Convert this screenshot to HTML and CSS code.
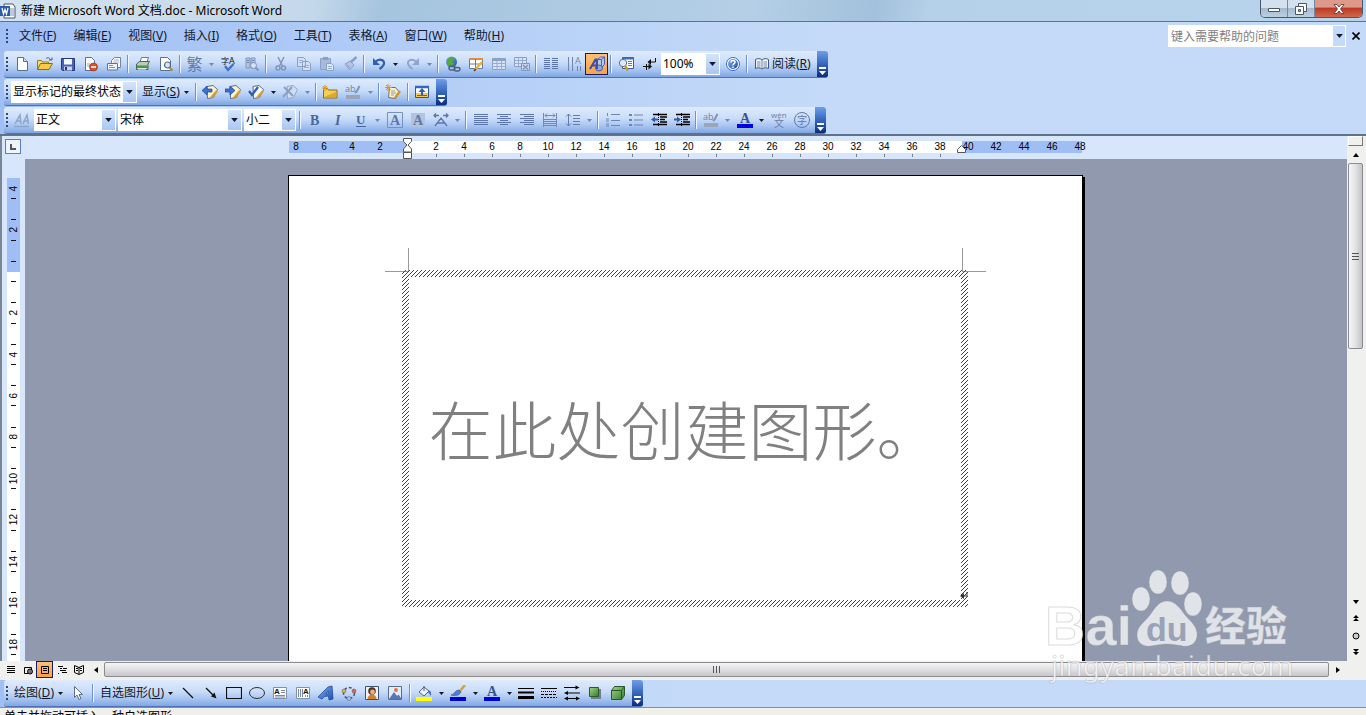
FILE: index.html
```
<!DOCTYPE html>
<html lang="zh-CN">
<head>
    <meta charset="UTF-8">
    <meta name="viewport" content="width=device-width, initial-scale=1.0">
    <title>新建 Microsoft Word 文档.doc - Microsoft Word</title>
    <link rel="stylesheet" href="styles.css">
</head>
<body>
    <!-- shared fills -->
    <svg class="fills" aria-hidden="true">
        <defs>
            <linearGradient id="green" x1="0" y1="0" x2="1" y2="1"><stop offset="0" stop-color="#a5d28a"/><stop offset="1" stop-color="#2f7d2b"/></linearGradient>
            <linearGradient id="blue" x1="0" y1="0" x2="1" y2="1"><stop offset="0" stop-color="#7fb2f2"/><stop offset="1" stop-color="#1d4fae"/></linearGradient>
            <pattern id="hatch" width="4" height="4" patternUnits="userSpaceOnUse" shape-rendering="crispEdges"><path d="M0 3h1v1H0zM1 2h1v1H1zM2 1h1v1H2zM3 0h1v1H3z" fill="#444"/></pattern>
        </defs>
    </svg>
    <!-- icon sprite -->
    <svg class="sprite" aria-hidden="true">
        <symbol id="caret" viewBox="0 0 5 3"><path d="M0 0h5L2.500 3z" fill="currentColor"/></symbol>
        <symbol id="word" viewBox="0 0 16 16"><path d="M4 1h9l2 3v11H4z" fill="#fff" stroke="#456"/><path d="M9 6h5M9 8h5M9 10h5M9 12h5" stroke="#7c93b8"/><path d="M0 3h10v10H0z" fill="#2a5caa"/><path d="M2 5l1.500 6L5 6.500 6.500 11 8 5" fill="none" stroke="#fff" stroke-width="1.300"/></symbol>
        <symbol id="new" viewBox="0 0 16 16"><path d="M3.500 1.500h6l4 4v9h-10z" fill="#fff" stroke="#5a6f94"/><path d="M9.500 1.500v4h4" fill="#cfdcf2" stroke="#5a6f94"/></symbol>
        <symbol id="open" viewBox="0 0 16 16"><path d="M.5 13.500v-9h4l1 1.500h6v2.500" fill="#f7d774" stroke="#9b7a1c"/><path d="M.5 13.500l3-6h12l-3.500 6z" fill="#fbc945" stroke="#8f6d12"/><path d="M9 2.500c2-1.500 4-.5 4.500 1.500M12 4h3V1.500" fill="none" stroke="#43618f"/></symbol>
        <symbol id="save" viewBox="0 0 16 16"><path d="M1.500 2.500h13v12h-12l-1-1z" fill="#4b63b5" stroke="#26377c"/><path d="M4 3h8v5.500H4z" fill="#f4f7ff"/><path d="M4 10.500h8v4H4z" fill="#cbd3ea"/><path d="M5 11h2v3H5z" fill="#26377c"/></symbol>
        <symbol id="perm" viewBox="0 0 16 16"><path d="M2.500 1.500h6l3 3v10h-9z" fill="#fff" stroke="#5a6f94"/><path d="M4 8h3M4 10h3" stroke="#9ab"/><circle cx="10.500" cy="11" r="4" fill="#d4532d" stroke="#8e2e12" stroke-width=".6"/><path d="M8 11h5" stroke="#fff" stroke-width="1.600"/></symbol>
        <symbol id="mail" viewBox="0 0 16 16"><path d="M5.500 9.500v-5l3-3h6v10h-3" fill="#fff" stroke="#7284a5"/><path d="M8 4h5M7 6h6" stroke="#a5b2c9"/><path d="M1.500 7.500h10v6.500h-10z" fill="#eef3fb" stroke="#5f7396"/><path d="M3 9.500h4M3 11.500h6" stroke="#8194b5"/></symbol>
        <symbol id="print" viewBox="0 0 16 16"><path d="M5 6l1.500-4.500h7L12 6z" fill="#fff" stroke="#6a7a90"/><path d="M1.500 8l3-2.500h10l-1.500 2.500v5.500h-11.500z" fill="#b9cdbb" stroke="#4c6552"/><path d="M2 9.500h11v2.500H2z" fill="#3f9c44"/><path d="M3 13h8" stroke="#fff"/></symbol>
        <symbol id="preview" viewBox="0 0 16 16"><path d="M2.500 1.500h7l3 3v10h-10z" fill="#fff" stroke="#5a6f94"/><circle cx="9.500" cy="9" r="3" fill="#d7e7fa" stroke="#53698c" stroke-width="1.200"/><path d="M11.500 11.500l3 3" stroke="#c28a1b" stroke-width="2.200"/></symbol>
        <symbol id="spell" viewBox="0 0 16 16"><text x="0" y="8" font-size="8" font-family="Noto Sans CJK SC" fill="#111">字</text><text x="8" y="8" font-size="9" font-family="Open Sans" fill="#111">A</text><path d="M4 10l3 4 5.500-6" fill="none" stroke="#3c6fc6" stroke-width="2.200"/></symbol>
        <symbol id="research" viewBox="0 0 16 16"><path d="M2 2h4v10H2zM7 2h4v10H7z" fill="#b3c4e4" stroke="#8095bb"/><path d="M3 4.500h2M8 4.500h2M3 6.500h2M8 6.500h2" stroke="#7187b0"/><circle cx="9.500" cy="9.500" r="3" fill="#d4e1f6" stroke="#8095bb"/><path d="M11.500 11.500l3 3" stroke="#8095bb" stroke-width="2"/></symbol>
        <symbol id="cut" viewBox="0 0 16 16"><path d="M5 1l4.500 9M11 1L6.500 10" stroke="#8296bb" stroke-width="1.500"/><circle cx="5" cy="12" r="2" fill="none" stroke="#8296bb" stroke-width="1.500"/><circle cx="10.500" cy="12" r="2" fill="none" stroke="#8296bb" stroke-width="1.500"/></symbol>
        <symbol id="copy" viewBox="0 0 16 16"><path d="M1.500 1.500h6l2 2v7h-8zM6.500 5.500h6l2 2v7h-8z" fill="#d3dff4" stroke="#8ba0c5"/><path d="M3 4.500h4M3 6.500h3M8 9.500h5M8 11.500h5" stroke="#9fb1d2"/></symbol>
        <symbol id="paste" viewBox="0 0 16 16"><path d="M1.500 2.500h10v11h-10z" fill="#a9bad9" stroke="#8ba0c5"/><path d="M4 1h5v3H4z" fill="#8ba0c5"/><path d="M7.500 7.500h5l2 2v5h-7z" fill="#dde7f8" stroke="#8ba0c5"/><path d="M9 10.500h4M9 12.500h4" stroke="#9fb1d2"/></symbol>
        <symbol id="brush" viewBox="0 0 16 16"><path d="M14.500 1L9 6" stroke="#8ba0c5" stroke-width="2.500"/><path d="M3 8l5-3 4 4-4.500 5z" fill="#b3c4e2" stroke="#8ba0c5"/><path d="M5 9l3 3" stroke="#8ba0c5"/></symbol>
        <symbol id="undo" viewBox="0 0 16 16"><path d="M4 6c5-4.500 11-1.500 8.500 3-1 2-2.500 3-4 4" fill="none" stroke="#2f5fb8" stroke-width="2.200"/><path d="M2 2v7h7z" fill="#2f5fb8"/></symbol>
        <symbol id="redo" viewBox="0 0 16 16"><path d="M12 6C7 1.500 1 4.500 3.500 9c1 2 2.500 3 4 4" fill="none" stroke="#8fa5cb" stroke-width="2"/><path d="M14 2v7H7z" fill="#8fa5cb"/></symbol>
        <symbol id="link" viewBox="0 0 16 16"><circle cx="6.500" cy="6" r="5.500" fill="url(#blue)"/><path d="M2 4c2-4 7-3 8-1L7 5l2 3-3 3C3 10 1 7 2 4z" fill="#55a83f"/><rect x="4" y="10" width="6" height="4" rx="2" fill="none" stroke="#4d607f" stroke-width="1.500"/><rect x="9" y="11.500" width="6" height="3.500" rx="1.700" fill="none" stroke="#4d607f" stroke-width="1.500"/></symbol>
        <symbol id="tables" viewBox="0 0 16 16"><path d="M1.500 2.500h13v10h-13z" fill="#fff" stroke="#687ba0"/><path d="M1 3h14" stroke="#df8f37" stroke-width="2"/><path d="M7.500 3v10M1 8h14" stroke="#687ba0"/><path d="M14 6l-7 8-1 1" stroke="#e6b53c" stroke-width="2.500"/><path d="M6 15l2-2" stroke="#633" stroke-width="1.500"/></symbol>
        <symbol id="table" viewBox="0 0 16 16"><path d="M1.500 2.500h13v11h-13z" fill="#d7e3f7" stroke="#8ba0c5"/><path d="M1 4h14" stroke="#8ba0c5" stroke-width="2"/><path d="M6 4v10M10.500 4v10M1 7.500h14M1 10.500h14" stroke="#98acd0"/></symbol>
        <symbol id="excel" viewBox="0 0 16 16"><path d="M.5 1.500h12v9H.5z" fill="#d7e3f7" stroke="#8ba0c5"/><path d="M4.500 2v8M8.500 2v8M1 4.500h11M1 7.500h11" stroke="#98acd0"/><path d="M7.500 7.500h8v7h-8z" fill="#c6d5ef" stroke="#7f95bd"/><path d="M9 9l5 4.500M14 9l-5 4.500" stroke="#7f95bd" stroke-width="1.500"/></symbol>
        <symbol id="cols" viewBox="0 0 16 16"><path d="M1 2.500h6M1 4.500h6M1 6.500h6M1 8.500h6M1 10.500h6M1 12.500h6M9 2.500h6M9 4.500h6M9 6.500h6M9 8.500h6M9 10.500h6M9 12.500h6" stroke="#5a76ad"/></symbol>
        <symbol id="textdir" viewBox="0 0 16 16"><path d="M2.500 1v14M6.500 1v14M11.500 10v5M14.500 10v5" stroke="#7186ae"/><text x="9" y="8" font-size="9" font-family="Open Sans" fill="#7186ae">A</text></symbol>
        <symbol id="drawing" viewBox="0 0 16 16"><path d="M8.500 3.500l3-2.500h4v7.500l-3 3h-4z" fill="#b9c9ea" stroke="#4a5fa3"/><path d="M8.500 3.500h4v8M12.500 3.500l3-2.500" fill="none" stroke="#4a5fa3"/><ellipse cx="10" cy="12" rx="3.500" ry="3" fill="#8fa6dd" stroke="#4a5fa3"/><path d="M1 13L6.500 3.500h1L8 13M3.500 9.500h4" fill="none" stroke="#3b4fa5" stroke-width="2"/></symbol>
        <symbol id="docmap" viewBox="0 0 16 16"><path d="M4.500 1.500h11v11h-11z" fill="#fff" stroke="#3e5b97"/><path d="M4 2.500h12" stroke="#3f6ec0" stroke-width="2"/><path d="M10 5.500h4M10 7.500h4M10 9.500h4" stroke="#5f7db5"/><circle cx="5" cy="7" r="3.700" fill="#dceafb" stroke="#5c7294"/><path d="M7 10l3 4.500" stroke="#c89a2d" stroke-width="2.500"/></symbol>
        <symbol id="marks" viewBox="0 0 16 16"><path d="M14.500 2v4H9M2 10.500h7" stroke="#111" fill="none"/><path d="M6.500 6l3.500-3v6zM11 10.500l-3.500-3v6z" fill="#111"/><path d="M5.500 8v6" stroke="#111"/></symbol>
        <symbol id="help" viewBox="0 0 16 16"><circle cx="8" cy="8" r="6.500" fill="#fff" stroke="#3a6cc4"/><circle cx="8" cy="8" r="5" fill="url(#blue)"/><path d="M6 6.500c0-3 4.500-2.500 4 0C9.800 7.700 8 7.700 8 9.500M8 10.500V12" stroke="#fff" stroke-width="1.500" fill="none"/></symbol>
        <symbol id="book" viewBox="0 0 16 16"><path d="M1.500 3.500c2-1.500 5-1 6.500.5 1.500-1.500 4.500-2 6.500-.5v9c-2-1-5-1-6.500.5-1.500-1.500-4.500-1.500-6.500-.5z" fill="#f4f8ff" stroke="#43587f"/><path d="M8 4v9M3 6h3.500M3 8h3.500M3 10h3.500M9.500 6H13M9.500 8H13M9.500 10H13" stroke="#6e83aa"/></symbol>
        <symbol id="prev" viewBox="0 0 16 16"><path d="M5 2.500l6-1 4.500 4-4 8-6 1z" fill="#fff3c9" stroke="#5b6c8d"/><path d="M15 7l-6 7" stroke="#d89c32" stroke-width="2.500"/><path d="M0 6.500L5 2v3h5v3H5v3z" fill="#3d73d0" stroke="#1e468f" stroke-width=".7"/></symbol>
        <symbol id="next" viewBox="0 0 16 16"><path d="M5 2.500l6-1 4.500 4-4 8-6 1z" fill="#fff3c9" stroke="#5b6c8d"/><path d="M15 7l-6 7" stroke="#d89c32" stroke-width="2.500"/><path d="M10 6.500L5 2v3H0v3h5v3z" fill="#3d73d0" stroke="#1e468f" stroke-width=".7"/></symbol>
        <symbol id="accept" viewBox="0 0 16 16"><path d="M5 2.500l6-1 4.500 4-4 8-6 1z" fill="#f7faff" stroke="#5b6c8d"/><path d="M15 7l-6 7" stroke="#d89c32" stroke-width="2.500"/><path d="M1 7l3 4 6-8" fill="none" stroke="#2c5cb5" stroke-width="2.200"/></symbol>
        <symbol id="reject" viewBox="0 0 16 16"><path d="M5 2.500l6-1 4.500 4-4 8-6 1z" fill="#cfdcf2" stroke="#93a7ca"/><path d="M2 3l9 9M10 3l-9 10" stroke="#8a9fc5" stroke-width="2"/></symbol>
        <symbol id="comment" viewBox="0 0 16 16"><path d="M1.500 4.500h4l1 1.500h8.500v8H1.500z" fill="#f6ce53" stroke="#8e6d16"/><path d="M2 13l12-5v5.500H2z" fill="#dda92a"/><path d="M3 1v6M0 4h6M1 2l4 4M5 2L1 6" stroke="#e39b1c"/></symbol>
        <symbol id="highlight" viewBox="0 0 16 16"><text x="0" y="8" font-size="9" font-family="Open Sans" fill="#6d80a8">ab</text><path d="M14.500 2L12 7l-2 2" stroke="#7e93ba" stroke-width="2" fill="none"/><path d="M1 11h14v4H1z" fill="#9ba5b8"/></symbol>
        <symbol id="track" viewBox="0 0 16 16"><path d="M4.500 3.500h6l4 5-4 6-7-1z" fill="#fff2c2" stroke="#6e6e72"/><path d="M6 7h4M6 9h5M6 11h3" stroke="#8899b5"/><path d="M15 7l-5 7" stroke="#d49635" stroke-width="2.500"/><path d="M3 0v7M0 3.500h7M1 1l4.500 5M5.500 1L1 6" stroke="#e58f1d"/></symbol>
        <symbol id="pane" viewBox="0 0 16 16"><path d="M1.500 2.500h13v11h-13z" fill="#fff" stroke="#36548f"/><path d="M1 3h14" stroke="#3467bd" stroke-width="2.500"/><path d="M2 9h12v4H2z" fill="#f2c858"/><path d="M8 4l3.500 4H9v3H7V8H4.500z" fill="#2d60ba"/><path d="M3 11.500h10" stroke="#7a6220"/></symbol>
        <symbol id="a4" viewBox="0 0 16 16"><path d="M1 12L6 3l1 9M3 9h4M9 12l4-9 1.500 9M9.500 9h5M0 14.500h15" fill="none" stroke="#8fa5cc" stroke-width="1.500"/></symbol>
        <symbol id="bold" viewBox="0 0 16 16"><text x="3" y="13" font-size="14" font-weight="bold" font-family="Liberation Serif" fill="#4a669f">B</text></symbol>
        <symbol id="italic" viewBox="0 0 16 16"><text x="5" y="13" font-size="14" font-style="italic" font-weight="bold" font-family="Liberation Serif" fill="#4a669f">I</text></symbol>
        <symbol id="underline" viewBox="0 0 16 16"><text x="3" y="12" font-size="13" font-weight="bold" font-family="Liberation Serif" fill="#4a669f">U</text><path d="M3 14.500h10" stroke="#4a669f"/></symbol>
        <symbol id="abox" viewBox="0 0 16 16"><path d="M.5.500h15v15H.5z" fill="none" stroke="#7890bd"/><text x="3" y="13" font-size="14" font-weight="bold" font-family="Liberation Serif" fill="#5c76ab">A</text></symbol>
        <symbol id="ashade" viewBox="0 0 16 16"><path d="M1 1h14v14H1z" fill="#b2c3df"/><text x="3" y="13" font-size="14" font-weight="bold" font-family="Liberation Serif" fill="#6478a3">A</text></symbol>
        <symbol id="ascale" viewBox="0 0 16 16"><path d="M2 14L8 6l6 8M4.500 11h7M1 3.500h5M10 3.500h5M3 1.500l-2 2 2 2M13 1.500l2 2-2 2" fill="none" stroke="#5c76ab" stroke-width="1.300"/></symbol>
        <symbol id="justify" viewBox="0 0 16 16"><path d="M1 2.500h14M1 4.500h14M1 6.500h14M1 8.500h14M1 10.500h14M1 12.500h14" stroke="#5c76ab"/></symbol>
        <symbol id="center" viewBox="0 0 16 16"><path d="M1 2.500h14M4 4.500h8M1 6.500h14M4 8.500h8M1 10.500h14M4 12.500h8" stroke="#5c76ab"/></symbol>
        <symbol id="right" viewBox="0 0 16 16"><path d="M1 2.500h14M5 4.500h10M1 6.500h14M5 8.500h10M1 10.500h14M5 12.500h10" stroke="#5c76ab"/></symbol>
        <symbol id="dist" viewBox="0 0 16 16"><path d="M1.500 1v14M14.500 1v14M3 3.500h10M5 1.500l-2 2 2 2M11 1.500l2 2-2 2M2 7.500h12M2 9.500h12M2 11.500h12M2 13.500h12" fill="none" stroke="#7389b3"/></symbol>
        <symbol id="spacing" viewBox="0 0 16 16"><path d="M3.500 2v12M1 4.500L3.500 2 6 4.500M1 11.500L3.500 14 6 11.500M8 3.500h7M8 6.500h7M8 9.500h7M8 12.500h7" fill="none" stroke="#647bab"/></symbol>
        <symbol id="numlist" viewBox="0 0 16 16"><path d="M2.500 1v3M1 7h3M1 9h3M1 12h3M1 14h3M6 2.500h9M6 8.500h9M6 13.500h9" stroke="#6f85b1"/></symbol>
        <symbol id="bullist" viewBox="0 0 16 16"><path d="M1 2h3v2H1zM1 7h3v2H1zM1 12h3v2H1z" fill="#6f85b1"/><path d="M6 3h9M6 8h9M6 13h9" stroke="#6f85b1"/></symbol>
        <symbol id="outdent" viewBox="0 0 16 16"><path d="M2 2.500h14M9 5h7M9 7.500h5M9 10h7M2 12.500h14" stroke="#000" stroke-width="1.300"/><path d="M7.500 1v14" stroke="#000" stroke-dasharray="1 1"/><path d="M0 7.500l4-3v2h3v2H4v2z" fill="#2f5cae"/></symbol>
        <symbol id="indent" viewBox="0 0 16 16"><path d="M2 2.500h14M9 5h7M9 7.500h5M9 10h7M2 12.500h14" stroke="#000" stroke-width="1.300"/><path d="M7.500 1v14" stroke="#000" stroke-dasharray="1 1"/><path d="M7 7.500l-4-3v2H0v2h3v2z" fill="#2f5cae"/></symbol>
        <symbol id="fontcolor" viewBox="0 0 16 16"><text x="3" y="11" font-size="14" font-weight="bold" font-family="Liberation Serif" fill="#34548f">A</text><path d="M0 12h16v4H0z" fill="#0000e0"/></symbol>
        <symbol id="pinyin" viewBox="0 0 16 16"><text x="0" y="6" font-size="8" font-family="Open Sans" fill="#6a80ad">wén</text><text x="3" y="15" font-size="10" font-family="Noto Sans CJK SC" fill="#6a80ad">文</text></symbol>
        <symbol id="encircle" viewBox="0 0 16 16"><circle cx="8" cy="8" r="7.500" fill="none" stroke="#5f77a9"/><text x="3" y="12" font-size="10" font-family="Noto Sans CJK SC" fill="#5f77a9">字</text></symbol>
        <symbol id="pointer" viewBox="0 0 16 16"><path d="M4.500 1.500v11l2.500-2.500 2 4.500 2-1-2-4h3.500z" fill="#fff" stroke="#5f6f8c"/></symbol>
        <symbol id="line" viewBox="0 0 16 16"><path d="M3 3l10 10" stroke="#111" stroke-width="1.200"/></symbol>
        <symbol id="arrow" viewBox="0 0 16 16"><path d="M3 3l8 8" stroke="#111" stroke-width="1.200"/><path d="M13.500 13.500L8 11.500l3.500-4z" fill="#111"/></symbol>
        <symbol id="rect" viewBox="0 0 16 16"><path d="M.5 2.500h15v11H.5z" fill="none" stroke="#111" stroke-width="1.200"/></symbol>
        <symbol id="oval" viewBox="0 0 16 16"><ellipse cx="8" cy="8" rx="7.500" ry="5.500" fill="none" stroke="#333"/></symbol>
        <symbol id="textbox" viewBox="0 0 16 16"><path d="M1.500 2.500h13v11h-13z" fill="#fff" stroke="#8090ae"/><text x="2" y="9" font-size="8" font-weight="bold" font-family="Liberation Sans" fill="#111">A</text><path d="M9 5.500h4M9 7.500h4M3 10.500h10M3 12h10" stroke="#7d8aa5"/></symbol>
        <symbol id="vtextbox" viewBox="0 0 16 16"><path d="M1.500 2.500h13v11h-13z" fill="#fff" stroke="#8090ae"/><text x="8" y="9" font-size="8" font-weight="bold" font-family="Liberation Sans" fill="#111">A</text><path d="M3.500 4v8M5.500 4v8M7.500 4v8M10.500 10v2M12.500 10v2" stroke="#7d8aa5"/></symbol>
        <symbol id="wordart" viewBox="0 0 16 16"><path d="M0 12L10 2l4-1 1 13-4 1-.5-4-4 .5L4 14zM8 9l2.500-.3L10 6z" fill="url(#blue)" fill-rule="evenodd" stroke="#2348a0" stroke-width=".8"/></symbol>
        <symbol id="diagram" viewBox="0 0 16 16"><circle cx="8" cy="8" r="5.500" fill="none" stroke="#45556f" stroke-width="1.500" stroke-dasharray="3 2"/><circle cx="3" cy="6" r="2" fill="#e0b04a" stroke="#555" stroke-width=".5"/><circle cx="13" cy="6" r="2" fill="#d9674a" stroke="#555" stroke-width=".5"/><circle cx="8" cy="13.500" r="2" fill="#a9c4ee" stroke="#555" stroke-width=".5"/></symbol>
        <symbol id="clipart" viewBox="0 0 16 16"><path d="M1.500 1.500h13v13h-13z" fill="#eef2fa" stroke="#40506e"/><path d="M3.500 14c0-6 9-6 9 0z" fill="#d2802c"/><circle cx="8" cy="6" r="3.800" fill="#52331b"/><circle cx="8.500" cy="7" r="2.400" fill="#efb07a"/></symbol>
        <symbol id="picture" viewBox="0 0 16 16"><path d="M1.500 1.500h13v13h-13z" fill="#e3edfa" stroke="#5a6b8b"/><path d="M2 14l5-7 3 4 1.500-1.500L14 13v1z" fill="#5878b4"/><circle cx="9" cy="5" r="2" fill="#e07641"/></symbol>
        <symbol id="fill" viewBox="0 0 16 16"><path d="M3 7l5-5 5 4-5 5z" fill="#eaf1fb" stroke="#4e6185"/><path d="M8 6V1" stroke="#4e6185"/><path d="M12 5c4 1 3 4 3 6l-3-4z" fill="#3f6fc4"/><path d="M0 12h16v4H0z" fill="#ffff00"/></symbol>
        <symbol id="linecolor" viewBox="0 0 16 16"><path d="M15 0l-5 6" stroke="#d1a23c" stroke-width="2.500"/><path d="M1 10c3 0 4-5 8-5l2 2c-2 4-6 4-10 3z" fill="#4f7fd2" stroke="#2c4f98" stroke-width=".6"/><path d="M0 12h16v4H0z" fill="#0000d0"/></symbol>
        <symbol id="weights" viewBox="0 0 16 16"><path d="M0 3.500h16" stroke="#000"/><path d="M0 7.500h16" stroke="#000" stroke-width="2"/><path d="M0 12.500h16" stroke="#000" stroke-width="3"/></symbol>
        <symbol id="dashes" viewBox="0 0 16 16"><path d="M0 3.500h16" stroke="#000"/><path d="M0 6.500h16" stroke="#000" stroke-dasharray="1 1"/><path d="M0 9.500h16" stroke="#000" stroke-dasharray="3 1"/><path d="M0 12.500h16" stroke="#000" stroke-dasharray="2 1"/></symbol>
        <symbol id="arrows" viewBox="0 0 16 16"><path d="M0 2.500h14M2 8h14M2 13.500h12" stroke="#000"/><path d="M15.500 2.500L11.500.5v4zM0 8l4-2v4zM0 13.500l4-2v4zM16 13.500l-4-2v4z" fill="#000"/></symbol>
        <symbol id="shadow" viewBox="0 0 16 16"><path d="M4 4h10v10H4z" fill="#6e7f92"/><path d="M2.500 2.500h9v9h-9z" fill="url(#green)" stroke="#2c5b2b"/></symbol>
        <symbol id="cube" viewBox="0 0 16 16"><path d="M1.500 5.500l3-4h10v9l-3 4h-10z" fill="url(#green)" stroke="#28582a"/><path d="M1.500 5.500h10v9M11.500 5.500l3-4" fill="none" stroke="#28582a"/></symbol>
        <symbol id="v-normal" viewBox="0 0 12 12"><path d="M2 2.500h8M2 4.500h8M2 6.500h8M2 8.500h8" stroke="#000"/></symbol>
        <symbol id="v-web" viewBox="0 0 12 12"><path d="M6 9.500H2.500v-6h7V5" fill="none" stroke="#000"/><circle cx="8" cy="7.500" r="2.500" fill="#777" stroke="#000"/></symbol>
        <symbol id="v-print" viewBox="0 0 12 12"><path d="M2.500 2.500h7v7h-7zM4 4.500h4M4 6.500h4" fill="none" stroke="#000"/></symbol>
        <symbol id="v-outline" viewBox="0 0 12 12"><path d="M2 2.500h5M4 4.500h2M7 4.500h4M4 6.500h6M6 8.500h5M2 9.500h1" stroke="#000"/></symbol>
        <symbol id="v-read" viewBox="0 0 12 12"><path d="M1.500 1.500L6 3.500l4.500-2v7L6 10.500l-4.500-2zM6 3v7M3 4.500h2M3 6.500h2M7 4.500h2M7 6.500h2" fill="none" stroke="#000"/></symbol>
    </svg>

    <header class="titlebar">
        <svg class="icon"><use href="#word"/></svg>
        <span class="caption">新建 Microsoft Word 文档.doc - Microsoft Word</span>
        <div class="winbtns">
            <button aria-label="最小化"><svg width="12" height="8"><path d="M.5 3.500h11v3H.5z" fill="#fff" stroke="#4a5568"/></svg></button>
            <button aria-label="还原"><svg width="12" height="12"><path d="M3.500.500h8v8h-8z" fill="#fff" stroke="#4a5568"/><path d="M.5 3.500h8v8h-8z" fill="#fff" stroke="#4a5568"/><path d="M3.500 6.500h2v2h-2z" fill="#9aa9bd" stroke="#4a5568"/></svg></button>
            <button class="close" aria-label="关闭"><svg width="12" height="10"><path d="M1 .5h3l2 2.500L8 .5h3L7.500 5 11 9.500H8L6 7 4 9.500H1L4.500 5z" fill="#fff" stroke="#5d2a2a" stroke-width=".8"/></svg></button>
        </div>
    </header>

    <div class="bars">
        <nav class="menubar">
            <span class="grip"></span>
            <button>文件(<u>F</u>)</button>
            <button>编辑(<u>E</u>)</button>
            <button>视图(<u>V</u>)</button>
            <button>插入(<u>I</u>)</button>
            <button>格式(<u>O</u>)</button>
            <button>工具(<u>T</u>)</button>
            <button>表格(<u>A</u>)</button>
            <button>窗口(<u>W</u>)</button>
            <button>帮助(<u>H</u>)</button>
            <div class="ask">
                <input type="text" aria-label="帮助问题" placeholder="键入需要帮助的问题">
                <button class="ask-arrow" aria-label="展开"><svg class="caret"><use href="#caret"/></svg></button>
                <button class="ask-close" aria-label="关闭窗口"><svg width="8" height="8"><path d="M.5.500l7 7M7.500.500l-7 7" stroke="#000" stroke-width="1.600"/></svg></button>
            </div>
        </nav>

        <div class="toolbar">
            <span class="grip"></span>
            <button class="tb" aria-label="新建"><svg class="icon"><use href="#new"/></svg></button>
            <button class="tb" aria-label="打开"><svg class="icon"><use href="#open"/></svg></button>
            <button class="tb" aria-label="保存"><svg class="icon"><use href="#save"/></svg></button>
            <button class="tb" aria-label="权限"><svg class="icon"><use href="#perm"/></svg></button>
            <button class="tb" aria-label="电子邮件"><svg class="icon"><use href="#mail"/></svg></button>
            <span class="sep"></span>
            <button class="tb" aria-label="打印"><svg class="icon"><use href="#print"/></svg></button>
            <button class="tb" aria-label="打印预览"><svg class="icon"><use href="#preview"/></svg></button>
            <span class="sep"></span>
            <button class="tb trad">繁</button>
            <button class="drop off" aria-label="更多"><svg class="caret"><use href="#caret"/></svg></button>
            <button class="tb" aria-label="拼写和语法"><svg class="icon"><use href="#spell"/></svg></button>
            <button class="tb" aria-label="信息检索"><svg class="icon"><use href="#research"/></svg></button>
            <span class="sep"></span>
            <button class="tb" aria-label="剪切"><svg class="icon"><use href="#cut"/></svg></button>
            <button class="tb" aria-label="复制"><svg class="icon"><use href="#copy"/></svg></button>
            <button class="tb" aria-label="粘贴"><svg class="icon"><use href="#paste"/></svg></button>
            <button class="tb" aria-label="格式刷"><svg class="icon"><use href="#brush"/></svg></button>
            <span class="sep"></span>
            <button class="tb" aria-label="撤消"><svg class="icon"><use href="#undo"/></svg></button>
            <button class="drop" aria-label="更多"><svg class="caret"><use href="#caret"/></svg></button>
            <button class="tb" aria-label="恢复"><svg class="icon"><use href="#redo"/></svg></button>
            <button class="drop off" aria-label="更多"><svg class="caret"><use href="#caret"/></svg></button>
            <span class="sep"></span>
            <button class="tb" aria-label="超链接"><svg class="icon"><use href="#link"/></svg></button>
            <button class="tb" aria-label="表格和边框"><svg class="icon"><use href="#tables"/></svg></button>
            <button class="tb" aria-label="插入表格"><svg class="icon"><use href="#table"/></svg></button>
            <button class="tb" aria-label="插入工作表"><svg class="icon"><use href="#excel"/></svg></button>
            <span class="sep"></span>
            <button class="tb" aria-label="分栏"><svg class="icon"><use href="#cols"/></svg></button>
            <button class="tb" aria-label="更改文字方向"><svg class="icon"><use href="#textdir"/></svg></button>
            <button class="tb on" aria-label="绘图"><svg class="icon"><use href="#drawing"/></svg></button>
            <span class="sep"></span>
            <button class="tb" aria-label="文档结构图"><svg class="icon"><use href="#docmap"/></svg></button>
            <button class="tb" aria-label="显示段落标记"><svg class="icon"><use href="#marks"/></svg></button>
            <span class="combo zoom"><select aria-label="显示比例"><option>100%</option></select><span class="combo-arrow"><svg class="caret"><use href="#caret"/></svg></span></span>
            <button class="tb" aria-label="帮助"><svg class="icon"><use href="#help"/></svg></button>
            <span class="sep"></span>
            <button class="txt"><svg class="icon"><use href="#book"/></svg>阅读(<u>R</u>)</button>
            <button class="end" aria-label="工具栏选项"><svg width="7" height="8"><path d="M0 1h7" stroke="#fff" stroke-width="2"/><path d="M0 4h7L3.500 8z" fill="#fff"/></svg></button>
        </div>

        <div class="toolbar">
            <span class="grip"></span>
            <span class="combo review"><select aria-label="显示以审阅"><option>显示标记的最终状态</option></select><span class="combo-arrow"><svg class="caret"><use href="#caret"/></svg></span></span>
            <button class="txt">显示(<u>S</u>)<svg class="caret"><use href="#caret"/></svg></button>
            <span class="sep"></span>
            <button class="tb" aria-label="前一处修订"><svg class="icon"><use href="#prev"/></svg></button>
            <button class="tb" aria-label="后一处修订"><svg class="icon"><use href="#next"/></svg></button>
            <button class="tb" aria-label="接受修订"><svg class="icon"><use href="#accept"/></svg></button>
            <button class="drop" aria-label="更多"><svg class="caret"><use href="#caret"/></svg></button>
            <button class="tb" aria-label="拒绝修订"><svg class="icon"><use href="#reject"/></svg></button>
            <button class="drop off" aria-label="更多"><svg class="caret"><use href="#caret"/></svg></button>
            <span class="sep"></span>
            <button class="tb" aria-label="插入批注"><svg class="icon"><use href="#comment"/></svg></button>
            <button class="tb" aria-label="突出显示"><svg class="icon"><use href="#highlight"/></svg></button>
            <button class="drop off" aria-label="更多"><svg class="caret"><use href="#caret"/></svg></button>
            <span class="sep"></span>
            <button class="tb" aria-label="修订"><svg class="icon"><use href="#track"/></svg></button>
            <span class="sep"></span>
            <button class="tb" aria-label="审阅窗格"><svg class="icon"><use href="#pane"/></svg></button>
            <button class="end" aria-label="工具栏选项"><svg width="7" height="8"><path d="M0 1h7" stroke="#fff" stroke-width="2"/><path d="M0 4h7L3.500 8z" fill="#fff"/></svg></button>
        </div>

        <div class="toolbar">
            <span class="grip"></span>
            <button class="tb" aria-label="格式窗格"><svg class="icon"><use href="#a4"/></svg></button>
            <span class="combo style"><select aria-label="样式"><option>正文</option></select><span class="combo-arrow"><svg class="caret"><use href="#caret"/></svg></span></span>
            <span class="combo font"><select aria-label="字体"><option>宋体</option></select><span class="combo-arrow"><svg class="caret"><use href="#caret"/></svg></span></span>
            <span class="combo size"><select aria-label="字号"><option>小二</option></select><span class="combo-arrow"><svg class="caret"><use href="#caret"/></svg></span></span>
            <span class="sep"></span>
            <button class="tb" aria-label="加粗"><svg class="icon"><use href="#bold"/></svg></button>
            <button class="tb" aria-label="倾斜"><svg class="icon"><use href="#italic"/></svg></button>
            <button class="tb" aria-label="下划线"><svg class="icon"><use href="#underline"/></svg></button>
            <button class="drop off" aria-label="更多"><svg class="caret"><use href="#caret"/></svg></button>
            <button class="tb" aria-label="字符边框"><svg class="icon"><use href="#abox"/></svg></button>
            <button class="tb" aria-label="字符底纹"><svg class="icon"><use href="#ashade"/></svg></button>
            <button class="tb" aria-label="字符缩放"><svg class="icon"><use href="#ascale"/></svg></button>
            <button class="drop off" aria-label="更多"><svg class="caret"><use href="#caret"/></svg></button>
            <span class="sep"></span>
            <button class="tb" aria-label="两端对齐"><svg class="icon"><use href="#justify"/></svg></button>
            <button class="tb" aria-label="居中"><svg class="icon"><use href="#center"/></svg></button>
            <button class="tb" aria-label="右对齐"><svg class="icon"><use href="#right"/></svg></button>
            <button class="tb" aria-label="分散对齐"><svg class="icon"><use href="#dist"/></svg></button>
            <button class="tb" aria-label="行距"><svg class="icon"><use href="#spacing"/></svg></button>
            <button class="drop off" aria-label="更多"><svg class="caret"><use href="#caret"/></svg></button>
            <span class="sep"></span>
            <button class="tb" aria-label="编号"><svg class="icon"><use href="#numlist"/></svg></button>
            <button class="tb" aria-label="项目符号"><svg class="icon"><use href="#bullist"/></svg></button>
            <button class="tb" aria-label="减少缩进量"><svg class="icon"><use href="#outdent"/></svg></button>
            <button class="tb" aria-label="增加缩进量"><svg class="icon"><use href="#indent"/></svg></button>
            <span class="sep"></span>
            <button class="tb" aria-label="突出显示"><svg class="icon"><use href="#highlight"/></svg></button>
            <button class="drop off" aria-label="更多"><svg class="caret"><use href="#caret"/></svg></button>
            <button class="tb" aria-label="字体颜色"><svg class="icon"><use href="#fontcolor"/></svg></button>
            <button class="drop" aria-label="更多"><svg class="caret"><use href="#caret"/></svg></button>
            <button class="tb" aria-label="拼音指南"><svg class="icon"><use href="#pinyin"/></svg></button>
            <button class="tb" aria-label="带圈字符"><svg class="icon"><use href="#encircle"/></svg></button>
            <button class="end" aria-label="工具栏选项"><svg width="7" height="8"><path d="M0 1h7" stroke="#fff" stroke-width="2"/><path d="M0 4h7L3.500 8z" fill="#fff"/></svg></button>
        </div>
    </div>

    <main class="workspace">
        <div class="editor">
            <div class="hruler">
                <button class="tabstop" aria-label="制表符"><svg width="6" height="6"><path d="M1 0v5h5" fill="none" stroke="#555" stroke-width="2"/></svg></button>
                <div class="hscale">
                    <span>8</span><span>6</span><span>4</span><span>2</span><span></span>
                    <span class="t">2</span><span class="t">4</span><span class="t">6</span><span class="t">8</span><span class="t">10</span><span class="t">12</span><span class="t">14</span><span class="t">16</span><span class="t">18</span><span class="t">20</span><span class="t">22</span><span class="t">24</span><span class="t">26</span><span class="t">28</span><span class="t">30</span><span class="t">32</span><span class="t">34</span><span class="t">36</span><span class="t">38</span>
                    <span>40</span><span>42</span><span>44</span><span>46</span><span>48</span>
                    <svg class="mark-left" width="9" height="21"><path d="M.5.500h8v3L5 7l3.500 4v3h-8v-3L4 7 .5 3.500zM.5 14.500h8v6h-8z" fill="#fff" stroke="#555"/></svg>
                    <svg class="mark-right" width="9" height="8"><path d="M4.500.500l4 4v3h-8v-3z" fill="#fff" stroke="#555"/></svg>
                </div>
            </div>
            <div class="docrow">
                <div class="vruler">
                    <div class="vscale">
                        <span><b>4</b></span><span><b>2</b></span><span><b></b></span><span><b>2</b></span><span><b>4</b></span><span><b>6</b></span><span><b>8</b></span><span><b>10</b></span><span><b>12</b></span><span><b>14</b></span><span><b>16</b></span><span><b>18</b></span>
                    </div>
                </div>
                <div class="desk">
                    <div class="page">
                        <div class="margins"><i></i><i></i></div>
                        <div class="canvas">
                            <svg class="frame"><rect width="100%" height="100%" fill="url(#hatch)"/></svg>
                            <p>在此处创建图形。</p>
                            <svg class="para" width="8" height="8"><path d="M7 0v4H3" fill="none" stroke="#333"/><path d="M0 4l4-3v6z" fill="#333"/></svg>
                        </div>
                    </div>
                </div>
            </div>
        </div>
        <div class="vscroll">
            <span class="split"></span>
            <button class="up" aria-label="向上"><svg width="6" height="4"><path d="M3 0l3 4H0z"/></svg></button>
            <span class="thumb"><svg width="7" height="7"><path d="M0 .5h7M0 3.500h7M0 6.500h7" stroke="#555"/></svg></span>
            <span class="track"></span>
            <button aria-label="向下"><svg width="6" height="4"><path d="M0 0h6L3 4z"/></svg></button>
            <button aria-label="前一页"><svg width="6" height="7"><path d="M3 0l3 3H0zM3 3l3 3H0z"/></svg></button>
            <button aria-label="选择浏览对象"><svg width="8" height="8"><circle cx="4" cy="4" r="3" fill="#ccc" stroke="#000"/></svg></button>
            <button aria-label="下一页"><svg width="6" height="7"><path d="M0 0h6L3 3zM0 3h6L3 6z"/></svg></button>
        </div>

        <div class="watermark">
            <svg width="260" height="122">
                <g fill="#fff" fill-opacity=".72" stroke="#999" stroke-opacity=".35">
                    <ellipse cx="93" cy="31" rx="9" ry="12"/>
                    <ellipse cx="110" cy="14" rx="9" ry="12"/>
                    <ellipse cx="132" cy="15" rx="9" ry="12"/>
                    <ellipse cx="145" cy="36" rx="9" ry="12"/>
                    <path d="M119 33c8 0 13 7 18 14 6 7 13 12 12 21-1 8-7 11-14 10-6-1-10-2-16-2s-10 1-16 2c-8 1-14-3-14-11 0-9 8-13 13-20 5-7 9-14 17-14z"/>
                    <text x="-3" y="77" font-size="56" font-weight="bold" font-family="Liberation Sans">Bai</text>
                    <text x="157" y="73" font-size="41" font-weight="900" font-family="Noto Sans CJK SC">经验</text>
                    <text x="3" y="108" font-size="28" font-family="Noto Sans">jingyan.baidu.com</text>
                </g>
                <text x="98" y="73" font-size="34" font-weight="bold" font-family="Liberation Sans" fill="#9aa2b6">du</text>
            </svg>
        </div>
    </main>

    <div class="hscroll">
        <button aria-label="普通视图"><svg class="view"><use href="#v-normal"/></svg></button>
        <button aria-label="Web 版式"><svg class="view"><use href="#v-web"/></svg></button>
        <button class="on" aria-label="页面视图"><svg class="view"><use href="#v-print"/></svg></button>
        <button aria-label="大纲视图"><svg class="view"><use href="#v-outline"/></svg></button>
        <button aria-label="阅读版式"><svg class="view"><use href="#v-read"/></svg></button>
        <button aria-label="向左"><svg width="4" height="6"><path d="M4 0v6L0 3z"/></svg></button>
        <span class="thumb"><svg width="8" height="7"><path d="M.5 0v7M3.500 0v7M6.500 0v7" stroke="#555"/></svg></span>
        <button aria-label="向右"><svg width="4" height="6"><path d="M0 0v6l4-3z"/></svg></button>
    </div>

    <div class="drawbar">
        <div class="toolbar">
            <span class="grip"></span>
            <button class="txt">绘图(<u>D</u>)<svg class="caret"><use href="#caret"/></svg></button>
            <button class="tb" aria-label="选择对象"><svg class="icon"><use href="#pointer"/></svg></button>
            <span class="sep"></span>
            <button class="txt">自选图形(<u>U</u>)<svg class="caret"><use href="#caret"/></svg></button>
            <button class="tb" aria-label="直线"><svg class="icon"><use href="#line"/></svg></button>
            <button class="tb" aria-label="箭头"><svg class="icon"><use href="#arrow"/></svg></button>
            <button class="tb" aria-label="矩形"><svg class="icon"><use href="#rect"/></svg></button>
            <button class="tb" aria-label="椭圆"><svg class="icon"><use href="#oval"/></svg></button>
            <button class="tb" aria-label="文本框"><svg class="icon"><use href="#textbox"/></svg></button>
            <button class="tb" aria-label="竖排文本框"><svg class="icon"><use href="#vtextbox"/></svg></button>
            <button class="tb" aria-label="艺术字"><svg class="icon"><use href="#wordart"/></svg></button>
            <button class="tb" aria-label="组织结构图"><svg class="icon"><use href="#diagram"/></svg></button>
            <button class="tb" aria-label="剪贴画"><svg class="icon"><use href="#clipart"/></svg></button>
            <button class="tb" aria-label="图片"><svg class="icon"><use href="#picture"/></svg></button>
            <span class="sep"></span>
            <button class="tb" aria-label="填充颜色"><svg class="icon"><use href="#fill"/></svg></button>
            <button class="drop" aria-label="更多"><svg class="caret"><use href="#caret"/></svg></button>
            <button class="tb" aria-label="线条颜色"><svg class="icon"><use href="#linecolor"/></svg></button>
            <button class="drop" aria-label="更多"><svg class="caret"><use href="#caret"/></svg></button>
            <button class="tb" aria-label="字体颜色"><svg class="icon"><use href="#fontcolor"/></svg></button>
            <button class="drop" aria-label="更多"><svg class="caret"><use href="#caret"/></svg></button>
            <button class="tb" aria-label="线型"><svg class="icon"><use href="#weights"/></svg></button>
            <button class="tb" aria-label="虚线线型"><svg class="icon"><use href="#dashes"/></svg></button>
            <button class="tb" aria-label="箭头样式"><svg class="icon"><use href="#arrows"/></svg></button>
            <button class="tb" aria-label="阴影样式"><svg class="icon"><use href="#shadow"/></svg></button>
            <button class="tb" aria-label="三维效果样式"><svg class="icon"><use href="#cube"/></svg></button>
            <button class="end" aria-label="工具栏选项"><svg width="7" height="8"><path d="M0 1h7" stroke="#fff" stroke-width="2"/><path d="M0 4h7L3.500 8z" fill="#fff"/></svg></button>
        </div>
    </div>

    <footer class="status">单击并拖动可插入一种自选图形</footer>
</body>
</html>
```
FILE: styles.css
```
* {
    box-sizing: border-box;
}
body {
    margin: 0;
    height: 100vh;
    display: flex;
    flex-direction: column;
    overflow: hidden;
    background: #c4daf8;
    color: #10182c;
    font-family: "Noto Sans", "Noto Sans CJK SC", sans-serif;
    font-size: 12px;
    line-height: 16px;
}
button, input, select {
    margin: 0;
    padding: 0;
    border: 0;
    background: none;
    color: inherit;
    font: inherit;
}
button {
    display: flex;
    align-items: center;
    justify-content: center;
    flex: none;
    white-space: nowrap;
}
svg {
    display: block;
    flex: none;
}
.fills {
    position: absolute;
    width: 0;
    height: 0;
}
.sprite {
    display: none;
}
.icon {
    width: 16px;
    height: 16px;
}
.caret {
    width: 5px;
    height: 3px;
}

/* title bar */
.titlebar {
    display: flex;
    align-items: center;
    height: 22px;
    flex: none;
    border-bottom: 1px solid #5b7390;
    background: linear-gradient(100deg, #d3e2f0 0, #c3d8ea 23%, #a5c4de 28%, #b4cfe6 55%, #a3c1dc 64%, #b5d0e9 68%, #b8d3ec 100%);
}
.caption {
    flex: 1;
    padding-left: 5px;
    color: #000;
}
.winbtns {
    display: flex;
    align-self: flex-start;
    margin-right: 3px;
    border: 1px solid #46586e;
    border-top: 0;
    border-radius: 0 0 5px 5px;
    overflow: hidden;
}
.winbtns button {
    width: 27px;
    height: 17px;
    border-right: 1px solid #7288a3;
    background: linear-gradient(#d3e0ee 0 45%, #a5b9d0 50%, #bccfe2);
}
.winbtns .close {
    width: 47px;
    border-right: 0;
    background: linear-gradient(#dd9a8b 0 40%, #bd3a26 50%, #cf6a4c);
}

/* menu and toolbars */
.bars {
    display: flex;
    flex-direction: column;
    gap: 1px;
    flex: none;
    border-bottom: 2px solid #5f7289;
    background: linear-gradient(90deg, #a0bff5, #c4daf8 60%);
}
.menubar {
    display: flex;
    align-items: center;
    gap: 1px;
    height: 28px;
    padding-left: 4px;
}
.menubar > button {
    padding: 0 8px;
}
.grip {
    width: 2px;
    height: 15px;
    flex: none;
    margin: 0 2px;
    background: repeating-linear-gradient(#33476f 0 2px, transparent 2px 4px);
}
.ask {
    display: flex;
    align-items: center;
    margin-left: auto;
}
.ask input {
    width: 164px;
    height: 22px;
    padding: 0 3px;
    background: #fff;
}
.ask input::placeholder {
    color: #808080;
}
.ask-arrow {
    width: 14px;
    height: 22px;
    border: 1px solid #fff;
    background: #c4daf8;
}
.ask-close {
    width: 20px;
    height: 22px;
}
.ask .caret {
    width: 7px;
    height: 4px;
}
.toolbar {
    display: flex;
    align-items: center;
    width: fit-content;
    height: 27px;
    margin-left: 4px;
    border-bottom: 1px solid #4e72b5;
    border-radius: 3px;
    background: linear-gradient(#dfebfd, #c8dcf9 45%, #a4c2f0 75%, #80a6e2);
    overflow: hidden;
}
.tb {
    width: 23px;
    height: 22px;
}
.on {
    border: 1px solid #1b1b60;
    background: linear-gradient(#fdc079, #f9a14c);
}
.trad {
    color: #5d79ad;
    font-size: 16px;
}
.drop {
    width: 11px;
    height: 22px;
}
.off {
    color: #7487ad;
}
.sep {
    width: 2px;
    height: 18px;
    flex: none;
    margin: 0 2px;
    border-left: 1px solid #6d92cf;
    border-right: 1px solid #f2f7ff;
}
.txt {
    height: 22px;
    padding: 0 4px;
}
.txt .caret {
    margin-left: 4px;
}
.txt .icon {
    margin-right: 2px;
}
.end {
    align-self: stretch;
    align-items: flex-end;
    width: 11px;
    margin-left: 2px;
    padding-bottom: 2px;
    background: linear-gradient(#6f9ee8, #3566bd 50%, #0b2d7d);
}
.combo {
    position: relative;
    height: 22px;
    flex: none;
    margin: 0 1px;
}
.combo select {
    width: 100%;
    height: 22px;
    padding: 0 2px;
    appearance: none;
    background: #fff;
    color: #000;
}
.combo-arrow {
    position: absolute;
    top: 1px;
    right: 1px;
    bottom: 1px;
    width: 13px;
    display: flex;
    align-items: center;
    justify-content: center;
    background: linear-gradient(#d5e4fb, #a9c6f2);
    pointer-events: none;
}
.combo .caret {
    width: 7px;
    height: 4px;
}
.zoom {
    width: 59px;
}
.review {
    width: 126px;
}
.style {
    width: 82px;
}
.font {
    width: 124px;
}
.size {
    width: 52px;
}

/* rulers */
.workspace {
    position: relative;
    display: flex;
    flex: 1;
    min-height: 0;
}
.editor {
    display: flex;
    flex-direction: column;
    flex: 1;
    min-width: 0;
    border-left: 2px solid #7a8596;
    background: #d8e6fc;
}
.hruler {
    display: flex;
    height: 23px;
    flex: none;
    padding-left: 3px;
}
.tabstop {
    width: 16px;
    height: 15px;
    margin: 3px 8px 0 0;
    border: 1px solid #5c7fc0;
    background: #eef4ff;
}
.hscale {
    position: relative;
    display: flex;
    width: 812px;
    height: 12px;
    margin: 5px auto 0;
    background: linear-gradient(90deg, transparent 7px, #9fbef5 7px 125px, #fff 125px 680px, #9fbef5 680px 800px, transparent 800px);
    color: #000;
    font: 10px/12px "Liberation Sans Narrow", "Liberation Sans", sans-serif;
}
.hscale span {
    width: 28px;
    text-align: center;
}
.hscale .t::after {
    content: "";
    display: block;
    width: 1px;
    height: 3px;
    margin: 1px auto 0;
    background: #71809a;
}
.mark-left {
    position: absolute;
    left: 121px;
    top: -3px;
}
.mark-right {
    position: absolute;
    left: 675px;
    top: 4px;
}
.docrow {
    display: flex;
    flex: 1;
    min-height: 0;
}
.vruler {
    width: 23px;
    flex: none;
    padding: 9px 5px 0;
    overflow: hidden;
}
.vscale {
    display: grid;
    grid-template-rows: repeat(12, 1fr);
    height: 497px;
    background: linear-gradient(transparent 10px, #9fbef5 10px 104px, #fff 104px);
    color: #000;
    font: 10px/12px "Liberation Sans Narrow", "Liberation Sans", sans-serif;
}
.vscale span {
    display: flex;
    flex-direction: column;
    align-items: center;
    justify-content: space-between;
    padding: 10px 0;
}
.vscale span::before, .vscale span::after {
    content: "";
    width: 5px;
    height: 1px;
    background: #111;
}
.vscale span:first-child::before {
    visibility: hidden;
}
.vscale b {
    font-weight: normal;
    writing-mode: vertical-rl;
    transform: rotate(180deg);
}

/* document */
.desk {
    flex: 1;
    padding: 16px 2px 0 0;
    overflow: hidden;
    background: #9099ae;
}
.page {
    width: 795px;
    height: 1123px;
    margin: 0 auto;
    padding: 72px 96px 0;
    border: 1px solid #000;
    background: #fff;
    box-shadow: 2px 2px 0 #000;
}
.margins {
    display: flex;
    justify-content: space-between;
    height: 24px;
}
.margins i {
    width: 24px;
    border-right: 1px solid #999;
    border-bottom: 1px solid #999;
}
.margins i:last-child {
    border-right: 0;
    border-left: 1px solid #999;
}
.canvas {
    position: relative;
    display: flex;
    align-items: center;
    height: 337px;
    margin: -2px 18px 0 17px;
    padding: 7px;
}
.frame {
    position: absolute;
    inset: 0;
    width: 100%;
    height: 100%;
}
.canvas p {
    position: relative;
    flex: 1;
    align-self: stretch;
    margin: 0;
    padding-left: 20px;
    background: #fff;
    color: #808080;
    font: 300 64px/300px "Noto Sans CJK SC", sans-serif;
    white-space: nowrap;
}
.para {
    position: absolute;
    right: 0;
    bottom: 7px;
}

/* scrollbars */
.vscroll {
    display: flex;
    flex-direction: column;
    align-items: center;
    width: 19px;
    flex: none;
    padding-right: 2px;
    background: #f0f0ef;
}
.split {
    width: 15px;
    height: 10px;
    border: 1px solid #fff;
    border-right-color: #777;
    border-bottom-color: #777;
}
.vscroll button {
    width: 15px;
    height: 17px;
}
.thumb {
    display: flex;
    align-items: center;
    justify-content: center;
    border: 1px solid #8b8b90;
    border-radius: 2px;
}
.vscroll .thumb {
    width: 15px;
    height: 186px;
    background: linear-gradient(90deg, #f5f5f6, #e3e3e6 50%, #c3c3c8);
}
.track {
    flex: 1;
}
.hscroll {
    display: flex;
    align-items: center;
    height: 19px;
    flex: none;
    padding: 0 20px 2px 2px;
    background: #f0f0ef;
}
.hscroll button {
    width: 17px;
    height: 17px;
}
.hscroll .thumb {
    flex: 1;
    height: 15px;
    background: linear-gradient(#f5f5f6, #e0e0e3 50%, #c6c6cb);
}
.view {
    width: 12px;
    height: 12px;
}
.watermark {
    position: absolute;
    right: 58px;
    bottom: -29px;
    pointer-events: none;
}

/* drawing toolbar and status bar */
.drawbar {
    flex: none;
    border-bottom: 1px solid #8090a8;
    background: linear-gradient(90deg, #a0bff5, #c4daf8 50%);
}
.status {
    height: 7px;
    flex: none;
    padding: 1px 4px 0;
    overflow: hidden;
    background: #f0f0ea;
    color: #000;
}
```
